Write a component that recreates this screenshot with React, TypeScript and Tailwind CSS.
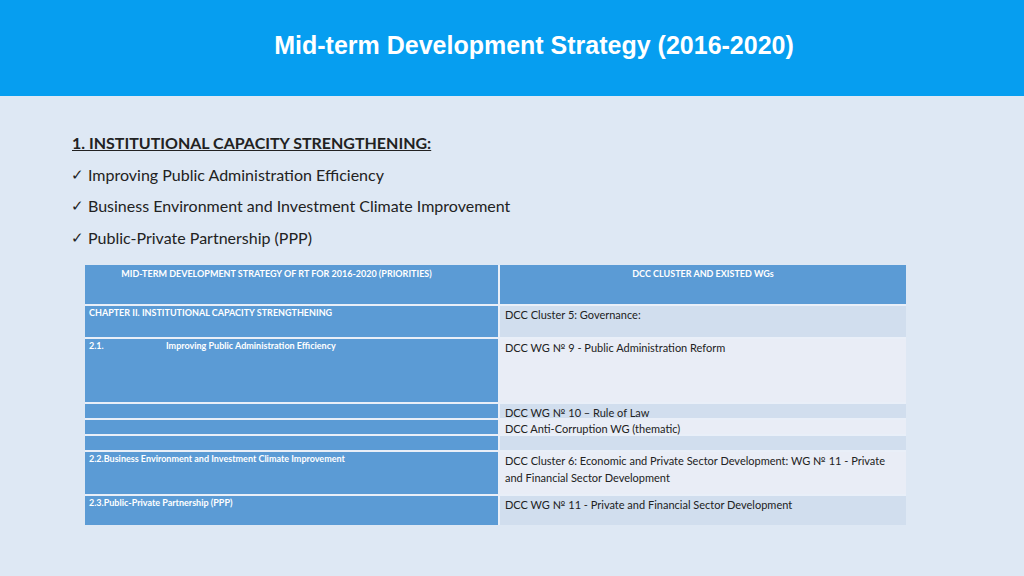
export default function App() {
  const rows: { l: string; r: string; h: string; light: boolean; bold?: boolean; split?: boolean }[] = [
    { l: 'CHAPTER II. INSTITUTIONAL CAPACITY STRENGTHENING', r: 'DCC Cluster 5: Governance:', h: 'h-[31px]', light: false },
    { l: '2.1.', r: 'DCC WG № 9 - Public Administration Reform', h: 'h-[63px]', light: true, split: true },
    { l: '', r: 'DCC WG № 10 – Rule of Law', h: 'h-[14px]', light: false },
    { l: '', r: 'DCC Anti-Corruption WG (thematic)', h: 'h-[14px]', light: true },
    { l: '', r: '', h: 'h-[14px]', light: false },
    { l: '2.2.Business Environment and Investment Climate Improvement', r: 'DCC Cluster 6: Economic and Private Sector Development: WG № 11 - Private and Financial Sector Development', h: 'h-[42px]', light: true },
    { l: '2.3.Public-Private Partnership (PPP)', r: 'DCC WG № 11 - Private and Financial Sector Development', h: 'h-[29px]', light: false },
  ]
  return (
    <div className="w-[1024px] h-[576px] bg-[#dee8f4] flex flex-col" style={{ fontFamily: 'Lato, "Open Sans", sans-serif' }}>
      <div className="h-[96px] bg-[#069ef0] flex items-center justify-center">
        <h1 className="text-white text-[25px] font-bold pl-[44px] pb-[4px]" style={{ fontFamily: '"Liberation Sans", Arial, sans-serif' }}>
          Mid-term Development Strategy (2016-2020)
        </h1>
      </div>
      <div className="pl-[72px] pt-[31px] text-[#222] text-[16px] leading-[31.5px]">
        <div className="font-bold underline">1. INSTITUTIONAL CAPACITY STRENGTHENING:</div>
        {['Improving Public Administration Efficiency', 'Business Environment and Investment Climate Improvement', 'Public-Private Partnership (PPP)'].map(t => (
          <div key={t} className="flex items-center gap-[4px] -ml-[1px]">
            <span className="text-[15px]">✓</span>{t}
          </div>
        ))}
      </div>
      <div className="ml-[85px] mt-[12px] w-[821px] grid grid-cols-[413px_406px] gap-[2px] bg-[#e9eff8]">
        <div className="h-[39px] bg-[#5b9bd5] text-white text-[9px] font-bold text-center pt-[2px] pr-[30px]">MID-TERM DEVELOPMENT STRATEGY  OF RT FOR 2016-2020 (PRIORITIES)</div>
        <div className="h-[39px] bg-[#5b9bd5] text-white text-[9px] font-bold text-center pt-[2px]">DCC CLUSTER AND EXISTED WGs</div>
        {rows.map((r, i) => (
          <>
            <div key={'l' + i} className={`${r.h} bg-[#5b9bd5] text-white text-[9px] font-bold px-[4px] leading-[14px] flex`}>
              {r.split ? (<><span className="w-[77px]">2.1.</span>Improving Public Administration Efficiency</>) : r.l}
            </div>
            <div key={'r' + i} className={`${r.h} ${r.light ? 'bg-[#e9edf6]' : 'bg-[#d1deee]'} text-[#222] text-[11px] px-[5px] leading-[17px] ${r.h === 'h-[14px]' ? 'leading-[14px]' : 'pt-[0px]'}`}>
              {r.r}
            </div>
          </>
        ))}
      </div>
    </div>
  )
}
